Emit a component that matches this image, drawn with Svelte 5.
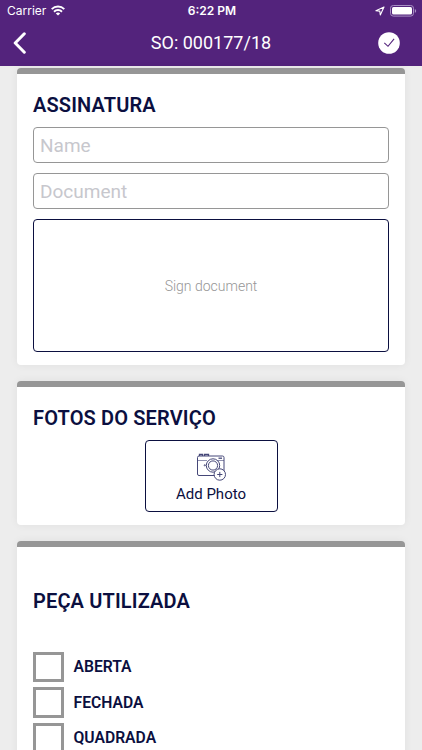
<script>
  let { order = "000177/18" } = $props();

  let name = $state("");
  let doc = $state("");
  let parts = $state([
    { label: "ABERTA", checked: false },
    { label: "FECHADA", checked: false },
    { label: "QUADRADA", checked: false },
  ]);
</script>

<div class="screen">
  <header>
    <div class="status">
      <div class="carrier">
        <span>Carrier</span>
        <svg width="14" height="11" viewBox="0 0 14 11" fill="none" stroke="#fff" stroke-width="1.9">
          <path d="M0.7 4.1a9 9 0 0 1 12.6 0" />
          <path d="M3 6.7a5.7 5.7 0 0 1 8 0" />
          <path d="M7 10.6 4.8 8.5a3.2 3.2 0 0 1 4.4 0z" fill="#fff" stroke="none" />
        </svg>
      </div>
      <span class="time">6:22 PM</span>
      <div class="indicators">
        <svg width="10" height="10" viewBox="0 0 10 10" fill="none" stroke="#fff" stroke-width="1.1" stroke-linejoin="round">
          <path d="M9 1 0.9 4.7 4.8 5.1 5.3 9z" />
        </svg>
        <svg width="27" height="12" viewBox="0 0 27 12">
          <rect x="0.5" y="0.5" width="23" height="10.6" rx="2.8" fill="none" stroke="#a88fc4" />
          <rect x="2" y="2" width="20" height="7.6" rx="1.5" fill="#fff" />
          <path d="M24.8 4v3.8q1.4-.5 1.4-1.9T24.8 4z" fill="#a88fc4" />
        </svg>
      </div>
    </div>
    <nav>
      <button class="back" aria-label="Back">
        <svg width="14" height="22" viewBox="0 0 14 22" fill="none" stroke="#fff" stroke-width="3" stroke-linecap="round" stroke-linejoin="round">
          <path d="M11.3 1.8 2.2 11l9.1 9.2" />
        </svg>
      </button>
      <h1>SO: {order}</h1>
      <button class="done" aria-label="Done">
        <svg width="22" height="22" viewBox="0 0 22 22" fill="none">
          <circle cx="11" cy="11" r="10.8" fill="#fff" />
          <path d="M6.3 10.9 10 14.3 16.1 6.9" stroke="#53237c" stroke-width="1.1" />
        </svg>
      </button>
    </nav>
  </header>

  <main>
    <section class="card">
      <h2>ASSINATURA</h2>
      <input bind:value={name} placeholder="Name" />
      <input bind:value={doc} placeholder="Document" />
      <button class="sign">Sign document</button>
    </section>

    <section class="card photos">
      <h2>FOTOS DO SERVIÇO</h2>
      <button class="add">
        <svg width="31" height="28" viewBox="0 0 31 28" fill="none" stroke="#454778" stroke-width="1">
          <rect x="1.5" y="3" width="26.5" height="19.5" rx="1.5" />
          <path d="M3.5 3V1.5h3V3M8.5 3V1.5h4V3" stroke-width="1.3" />
          <path d="M1.5 7.5H11M21 7.5h7" stroke-width="0.6" />
          <path d="M22.5 5.2h3.5" stroke-width="1.3" />
          <circle cx="8.8" cy="12.3" r="0.6" />
          <circle cx="17" cy="12.5" r="6.7" fill="#fff" />
          <circle cx="17" cy="12.5" r="4.6" />
          <circle cx="23.8" cy="21.5" r="5.7" fill="#fff" />
          <path d="M23.8 18.9v5.2M21.2 21.5h5.2" />
        </svg>
        <span>Add Photo</span>
      </button>
    </section>

    <section class="card parts">
      <h2>PEÇA UTILIZADA</h2>
      {#each parts as part}
        <label>
          <input type="checkbox" bind:checked={part.checked} />
          <span>{part.label}</span>
        </label>
      {/each}
    </section>
  </main>
</div>

<style>
  :global(body) {
    margin: 0;
    overflow: hidden;
    background: #ededed;
  }

  .screen {
    display: flex;
    flex-direction: column;
    height: 750px;
    overflow: hidden;
    background: #ededed;
    color: #0b0f40;
    font-family: Roboto, sans-serif;
  }

  button {
    padding: 0;
    border: 0;
    background: none;
    color: inherit;
    font-family: inherit;
  }

  svg {
    display: block;
  }

  header {
    flex: none;
    height: 65.5px;
    background: #53237c;
    color: #fff;
  }

  .status {
    display: grid;
    grid-template-columns: 1fr auto 1fr;
    align-items: center;
    height: 21px;
    padding: 0 5px 0 7px;
    font-family: Inter, sans-serif;
    font-size: 12px;
  }

  .carrier,
  .indicators {
    display: flex;
    align-items: center;
    gap: 5px;
  }

  .indicators {
    justify-content: flex-end;
  }

  .time {
    font-weight: 600;
  }

  nav {
    display: grid;
    grid-template-columns: 1fr auto 1fr;
    align-items: center;
    height: 43px;
    padding: 0 13px;
  }

  .back {
    justify-self: start;
  }

  .done {
    justify-self: end;
    margin-right: 9px;
  }

  h1 {
    margin: 0;
    font-size: 18px;
    font-weight: 400;
    line-height: 22px;
  }

  main {
    display: flex;
    flex-direction: column;
    gap: 16px;
    padding: 2.5px 16.75px 0;
  }

  .card {
    display: flex;
    flex-direction: column;
    flex: none;
    box-sizing: border-box;
    height: 297px;
    padding: 20px 16.25px 0;
    border-top: 6px solid #969696;
    border-radius: 4px;
    background: #fff;
    box-shadow: 0 0 8px rgba(0, 0, 0, 0.06);
  }

  .photos {
    height: 144px;
  }

  .parts {
    height: 300px;
    padding-top: 43px;
  }

  h2 {
    margin: 0 0 10px;
    font-size: 20px;
    font-weight: 600;
    letter-spacing: 0.14px;
    line-height: 23px;
  }

  .card > input {
    box-sizing: border-box;
    height: 36px;
    margin: 0 0 10px;
    padding: 0 6px;
    border: 1px solid #969696;
    border-radius: 4px;
    outline: none;
    font-family: inherit;
    font-size: 19px;
  }

  input::placeholder {
    color: #c7c7cd;
    opacity: 1;
  }

  .sign {
    height: 133px;
    border: 1px solid #0b0f40;
    border-radius: 4px;
    color: #969696;
    font-size: 14px;
    font-weight: 300;
  }

  .add {
    display: flex;
    flex-direction: column;
    align-items: center;
    align-self: center;
    box-sizing: border-box;
    width: 133px;
    height: 72px;
    padding-top: 12px;
    border: 1px solid #0b0f40;
    border-radius: 4px;
    font-size: 15px;
    line-height: 18px;
  }

  .add span {
    margin-top: 4px;
  }

  .parts h2 {
    margin-bottom: 38.5px;
  }

  label {
    display: flex;
    align-items: center;
    gap: 10px;
    height: 30.5px;
    margin-bottom: 5px;
    font-size: 15.7px;
    font-weight: 600;
  }

  label input {
    appearance: none;
    box-sizing: border-box;
    width: 30.5px;
    height: 30.5px;
    margin: 0;
    border: 3px solid #969696;
    background: #fff;
  }

  label input:checked {
    background: #53237c;
  }
</style>
